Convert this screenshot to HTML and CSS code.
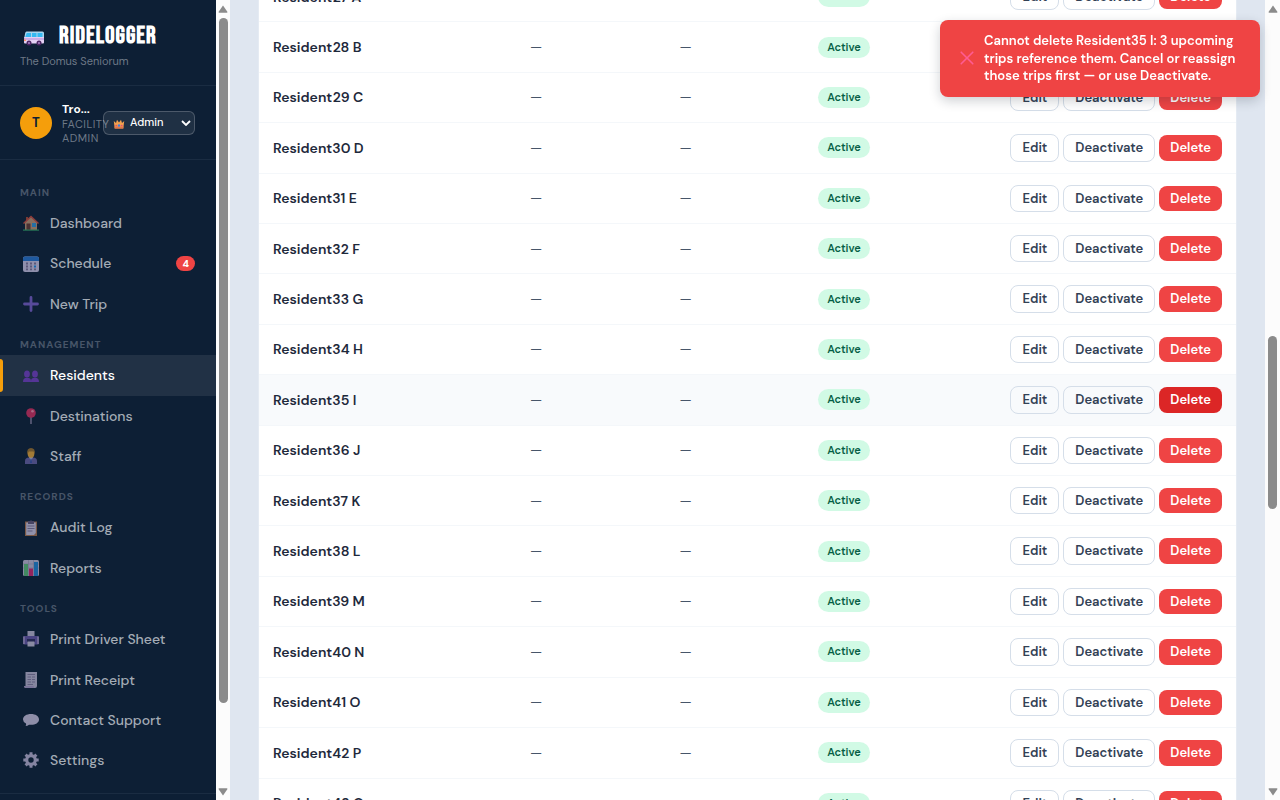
FILE: index.html
```html
<!DOCTYPE html>
<html lang="en">
<head>
<meta charset="utf-8">
<meta name="viewport" content="width=device-width, initial-scale=1">
<title>RideLogger – Residents</title>
<link rel="stylesheet" href="styles.css">
</head>
<body>
<div class="app">
  <aside class="sidebar">
    <header class="brand">
      <div class="brand-row">
        <svg class="brand-icon" viewBox="0 0 22 16" aria-hidden="true">
          <path d="M3.500 1.500H19.500Q21 1.500 21 3V8H1.200L2.200 3Q2.500 1.500 3.500 1.500Z" fill="#a9d5ee"/>
          <path d="M3.700 3H8V7H2.300ZM9 3H13.500V7H9ZM14.500 3H19.500V7H14.500Z" fill="#35b9f2"/>
          <path d="M1.200 7H21V12.500Q21 13.500 20 13.500H2Q1 13.500 1 12.500Z" fill="#e3d0f4"/>
          <path d="M1 8.500H21V9.500H1Z" fill="#b58bd8"/>
          <path d="M1 9.500H3V11H1Z" fill="#ff9a6a"/>
          <circle cx="6" cy="13" r="2.500" fill="#4b2563"/><circle cx="16" cy="13" r="2.500" fill="#4b2563"/>
          <circle cx="6" cy="13" r="1" fill="#a884c4"/><circle cx="16" cy="13" r="1" fill="#a884c4"/>
        </svg>
        <span class="brand-name">RIDELOGGER</span>
      </div>
      <div class="brand-sub">The Domus Seniorum</div>
    </header>
    <section class="user">
      <div class="avatar">T</div>
      <div class="user-info">
        <div class="user-name">Tro...</div>
        <div class="user-role">FACILITY ADMIN</div>
      </div>
      <div class="role-picker">
        <select class="role-select" aria-label="Role"><option>Admin</option></select>
        <svg class="crown" viewBox="0 0 12 12" aria-hidden="true">
          <path d="M.800 3 3 5 4 1.800 6 4.500 8 1.800 9 5 11.200 3 10.300 10.500H1.700Z" fill="#f3a04e"/>
          <path d="M1.500 8.500H10.500L10.300 10.500H1.700Z" fill="#e0744a"/>
          <circle cx="6" cy="7.500" r="1.200" fill="#3f7fe0"/><circle cx="3.200" cy="7.500" r=".8" fill="#e0457b"/><circle cx="8.800" cy="7.500" r=".8" fill="#e0457b"/>
        </svg>
        <svg class="chevron" viewBox="0 0 10 6" aria-hidden="true"><path d="M1 1 5 5 9 1" fill="none" stroke="#fff" stroke-width="1.800"/></svg>
      </div>
    </section>
    <nav class="nav">
      <h2 class="nav-label">MAIN</h2>
      <a class="nav-item" href="#"><svg class="nav-icon" viewBox="0 0 16 16" aria-hidden="true"><path d="M3 2H5V5H3Z" fill="#b04a32"/><path d="M2 7 8 1.500 14 7V15H2Z" fill="#c99a76"/><path d="M0 8 8 .500 16 8 15 9 8 2.500 1 9Z" fill="#d34b3e"/><path d="M3.500 8.500H7.500V15H3.500Z" fill="#6b3b33"/><path d="M9 8H13V12H9Z" fill="#2f9be0"/><path d="M0 14.500H16V15.700H0Z" fill="#35a869"/></svg><span>Dashboard</span></a>
      <a class="nav-item" href="#"><svg class="nav-icon" viewBox="0 0 16 16" aria-hidden="true"><rect y=".5" width="16" height="15.500" rx="2" fill="#d5cdec"/><path d="M0 5V2.500Q0 .500 2 .500H14Q16 .500 16 2.500V5Z" fill="#2878d8"/><path d="M3 6.500H5V8.500H3ZM7 6.500H9V8.500H7ZM11 6.500H13V8.500H11ZM3 9.500H5V11.500H3ZM7 9.500H9V11.500H7ZM3 12.500H5V14.200H3ZM7 12.500H9V14.200H7ZM11 12.500H13V14.200H11Z" fill="#85799f"/><path d="M11 9.500H13V11.500H11Z" fill="#1d8ff0"/></svg><span>Schedule</span><span class="badge">4</span></a>
      <a class="nav-item" href="#"><svg class="nav-icon" viewBox="0 0 16 16" aria-hidden="true"><path d="M8 1.500V14.500M1.500 8H14.500" fill="none" stroke="#7f62d0" stroke-width="2.800" stroke-linecap="round"/></svg><span>New Trip</span></a>
      <h2 class="nav-label">MANAGEMENT</h2>
      <a class="nav-item active" href="#" aria-current="page"><svg class="nav-icon" viewBox="0 0 16 16" aria-hidden="true"><g fill="#7238c4"><ellipse cx="4" cy="7" rx="2.900" ry="3.500"/><ellipse cx="12" cy="7" rx="2.900" ry="3.500"/><path d="M0 15Q0 10.800 4 10.800T8 14Q8 10.800 12 10.800T16 15Z"/></g></svg><span>Residents</span></a>
      <a class="nav-item" href="#"><svg class="nav-icon" viewBox="0 0 16 16" aria-hidden="true"><path d="M7.200 8H8.800V16H7.200Z" fill="#8b82a3"/><circle cx="8" cy="5" r="4.800" fill="#e02f62"/><circle cx="9.500" cy="3.200" r="1.300" fill="#ff92ae"/></svg><span>Destinations</span></a>
      <a class="nav-item" href="#"><svg class="nav-icon" viewBox="0 0 16 16" aria-hidden="true"><path d="M2 16V13Q2 9.500 6 9.500H10Q14 9.500 14 13V16Z" fill="#6c63a8"/><path d="M6 9H10L8 13Z" fill="#d6cde9"/><path d="M7.500 10.500H8.500L9 15H7Z" fill="#3a56b0"/><ellipse cx="8" cy="5.500" rx="3.400" ry="4.200" fill="#f2ad38"/><path d="M4.300 6Q3.500 0 8 0T11.700 6L10.500 3.500H6Z" fill="#a6762c"/></svg><span>Staff</span></a>
      <h2 class="nav-label">RECORDS</h2>
      <a class="nav-item" href="#"><svg class="nav-icon" viewBox="0 0 16 16" aria-hidden="true"><path d="M2 1.500H14V16H2Z" fill="#b5774f"/><path d="M3.200 2.500H12.800V13L11 15H3.200Z" fill="#d6cee9"/><path d="M5 1H7Q8-.500 9 1H11V4H5Z" fill="#65597c"/><path d="M4.500 6H11.500M4.500 8.500H11.500M4.500 11H9.500" stroke="#877ba2"/></svg><span>Audit Log</span></a>
      <a class="nav-item" href="#"><svg class="nav-icon" viewBox="0 0 16 16" aria-hidden="true"><rect width="16" height="16" rx="1.500" fill="#cbc3df"/><path d="M0 4H16M0 8H16M5.500 0V16M10.500 0V16" stroke="#a79dbd" stroke-width=".7"/><path d="M1 4H5V16H1Z" fill="#5fc47a"/><path d="M6 8.500H10V16H6Z" fill="#dc2874"/><path d="M11 2H15V16H11Z" fill="#2389dd"/></svg><span>Reports</span></a>
      <h2 class="nav-label">TOOLS</h2>
      <a class="nav-item" href="#"><svg class="nav-icon" viewBox="0 0 16 16" aria-hidden="true"><path d="M4.500 0H11.500V6H4.500Z" fill="#c8bfda"/><rect y="5" width="16" height="8.500" rx="1.500" fill="#6b58ad"/><path d="M0 5.500H2V13H0ZM14 5.500H16V13H14Z" fill="#a391c8"/><path d="M4 8H12V11H4Z" fill="#302d61"/><path d="M4.500 10.500H11.500V15.500H4.500Z" fill="#cec5df"/></svg><span>Print Driver Sheet</span></a>
      <a class="nav-item" href="#"><svg class="nav-icon" viewBox="0 0 16 16" aria-hidden="true"><path d="M2.500 0H14V14Q14 16 12 16H3Q1 16 1 14H2.500Z" fill="#c6bdd9"/><path d="M4.500 2.500H12M4.500 5H8M9 5H12M4.500 7.500H8M9 7.500H12M4.500 10H8M9 10H12M4.500 12.500H10" stroke="#8b81a6"/><path d="M1 14H10.500Q11 15.500 12 16H3Q1 16 1 14Z" fill="#b3a2cf"/></svg><span>Print Receipt</span></a>
      <a class="nav-item" href="#"><svg class="nav-icon" viewBox="0 0 16 16" aria-hidden="true"><path d="M8 2C12.500 2 16 4.200 16 7.500S12.500 12.800 8 12.800Q7 12.800 6 12.700 4.500 14 2.500 14 3.500 13 3 11.500 0 10 0 7.500C0 4.200 3.500 2 8 2Z" fill="#d3cae6"/></svg><span>Contact Support</span></a>
      <a class="nav-item" href="#"><svg class="nav-icon" viewBox="0 0 16 16" aria-hidden="true"><circle cx="8" cy="8" r="4.300" fill="none" stroke="#c4badb" stroke-width="3.200"/><path d="M8 .300V3M8 13V15.700M.300 8H3M13 8H15.700M2.600 2.600 4.500 4.500M11.500 11.500 13.400 13.400M2.600 13.400 4.500 11.500M11.500 4.500 13.400 2.600" stroke="#c4badb" stroke-width="3"/></svg><span>Settings</span></a>
    </nav>
    <footer class="sidebar-foot"></footer>
  </aside>
  <div class="scrollbar side-scroll" aria-hidden="true">
    <svg class="arrow" viewBox="0 0 10 8"><path d="M5 .500 9.500 7Q9.500 7.800 8.700 7.800H1.300Q.500 7.800 .500 7Z" fill="#8b8b8b"/></svg>
    <div class="track"><div class="thumb"></div><div class="rest"></div></div>
    <svg class="arrow" viewBox="0 0 10 8"><path d="M5 7.500 9.500 1Q9.500 .200 8.700 .200H1.300Q.500 .200 .500 1Z" fill="#8b8b8b"/></svg>
  </div>
  <main class="content">
    <div class="panel">
      <table class="residents">
        <colgroup><col class="col-name"><col class="col-a"><col class="col-b"><col></colgroup>
        <tbody id="rows"></tbody>
      </table>
    </div>
  </main>
  <div class="scrollbar page-scroll" aria-hidden="true">
    <svg class="arrow" viewBox="0 0 10 8"><path d="M5 .500 9.500 7Q9.500 7.800 8.700 7.800H1.300Q.500 7.800 .500 7Z" fill="#8b8b8b"/></svg>
    <div class="track"><div class="before"></div><div class="thumb"></div><div class="rest"></div></div>
    <svg class="arrow" viewBox="0 0 10 8"><path d="M5 7.500 9.500 1Q9.500 .200 8.700 .200H1.300Q.500 .200 .500 1Z" fill="#8b8b8b"/></svg>
  </div>
</div>
<div class="toast" role="alert">
  <svg class="toast-icon" viewBox="0 0 14 14" aria-hidden="true"><path d="M1.200 1.200 12.800 12.800M12.800 1.200 1.200 12.800" stroke="#ff5c93" stroke-width="1.600" stroke-linecap="round"/></svg>
  <div>Cannot delete Resident35 I: 3 upcoming<br>trips reference them. Cancel or reassign<br>those trips first — or use Deactivate.</div>
</div>
<script src="app.js"></script>
</body>
</html>
```
FILE: styles.css
```css
* { box-sizing: border-box; }

body {
  margin: 0;
  font-family: "DM Sans", Inter, "Open Sans", sans-serif;
  font-size: 14px;
  line-height: 1.6;
  color: #1e293b;
  background: #dfe6f0;
}

button, select { font-family: inherit; }

.app { display: flex; height: 100vh; overflow: hidden; }

/* Sidebar */
.sidebar {
  flex: 0 0 216px;
  display: flex;
  flex-direction: column;
  overflow: hidden;
  background: #0d1f35;
}

.brand {
  flex: none;
  padding: 20px 20px 14px;
  border-bottom: 1px solid #1a2c42;
}
.brand-row { display: flex; align-items: center; gap: 14px; padding-left: 3px; height: 32px; }
.brand-icon { width: 22px; height: 16px; margin-top: 3px; }
.brand-name {
  font-family: "Bebas Neue", "Roboto Condensed", "Liberation Sans Narrow", "Liberation Sans", sans-serif;
  font-size: 24px;
  font-weight: 700;
  letter-spacing: 1px;
  line-height: 30px;
  color: #fff;
}
.brand-sub { font-size: 11px; line-height: 19px; color: #6e7987; }

.user {
  flex: none;
  display: flex;
  align-items: center;
  gap: 10px;
  padding: 15px 21px 14px 20px;
  border-bottom: 1px solid #1a2c42;
}
.avatar {
  flex: none;
  width: 32px;
  height: 32px;
  border-radius: 50%;
  background: #f59e0b;
  color: #0d1f35;
  font-size: 13px;
  font-weight: 700;
  line-height: 32px;
  text-align: center;
}
.user-info { flex: 1; min-width: 0; }
.user-name { font-size: 12px; font-weight: 700; line-height: 16px; color: #fff; white-space: nowrap; }
.user-role { font-size: 11px; letter-spacing: .5px; line-height: 14px; color: #6e7987; }
.role-picker { position: relative; flex: 0 0 92px; display: flex; }
.role-select {
  appearance: none;
  width: 100%;
  height: 24px;
  padding: 0 20px 2px 26px;
  border: 1px solid rgba(255, 255, 255, .2);
  border-radius: 6px;
  background: rgba(255, 255, 255, .08);
  color: #fff;
  font-size: 11px;
  font-weight: 500;
}
.crown { position: absolute; left: 10px; top: 7px; width: 12px; height: 12px; }
.chevron { position: absolute; right: 4px; top: 9px; width: 10px; height: 6px; }

.nav { flex: none; padding: 12px 0; }
.nav-label {
  margin: 0;
  padding: 13px 20px 2px;
  font-size: 10px;
  font-weight: 700;
  letter-spacing: 1px;
  line-height: 16px;
  color: #475568;
}
.nav-item {
  position: relative;
  display: flex;
  align-items: center;
  gap: 11px;
  padding: 9px 21px 9px 23px;
  color: #a4acb6;
  font-size: 14px;
  font-weight: 500;
  text-decoration: none;
}
.nav-icon { flex: none; width: 16px; height: 16px; opacity: .65; }
.nav-item.active { background: #213145; color: #fff; }
.nav-item.active::before {
  content: "";
  position: absolute;
  left: 0;
  top: 4px;
  bottom: 4px;
  width: 3px;
  border-radius: 0 3px 3px 0;
  background: #f59e0b;
}
.badge {
  margin-left: auto;
  padding: 0 6px;
  border-radius: 8px;
  background: #ef4444;
  color: #fff;
  font-size: 10px;
  font-weight: 800;
  line-height: 15px;
}
.sidebar-foot { flex: 1; border-top: 1px solid #1a2c42; }

/* Scrollbars */
.scrollbar {
  display: flex;
  flex-direction: column;
  align-items: center;
  padding: 5px 0 4px;
  background: #fcfcfc;
}
.side-scroll { flex: 0 0 14px; }
.page-scroll { flex: 0 0 15px; }
.arrow { flex: none; width: 10px; height: 8px; }
.track { flex: 1; display: flex; flex-direction: column; width: 9px; padding: 5px 0; }
.thumb { border-radius: 5px; background: #8b8b8b; }
.side-scroll .thumb { flex: 685; }
.side-scroll .rest { flex: 80; }
.page-scroll .before { flex: 318; }
.page-scroll .thumb { flex: 173; }
.page-scroll .rest { flex: 274; }

/* Residents table */
.content { flex: 1; min-width: 0; padding: 0 28px; overflow: hidden; }
.panel {
  margin-top: -29px;
  border: 1px solid #e5ebf3;
  background: #fff;
}
.residents { width: 100%; table-layout: fixed; border-collapse: separate; border-spacing: 0; }
.col-name { width: 26.3%; }
.col-a { width: 15.3%; }
.col-b { width: 14.2%; }
.residents td {
  padding: 11px 14px;
  border-bottom: 1px solid #f4f7fa;
  color: #475569;
  vertical-align: middle;
}
.residents .name { color: #1e293b; font-weight: 600; }
.residents tr.hovered td { background: #f8fafc; }
.row-end { display: flex; align-items: center; justify-content: space-between; }
.status {
  padding: 2px 9px;
  border-radius: 11px;
  background: #d1fae5;
  color: #065f46;
  font-size: 11px;
  font-weight: 600;
  line-height: 17px;
}
.actions { display: flex; align-items: center; gap: 4px; }
.btn {
  padding: 4px 11px;
  border: 1px solid #d5dee9;
  border-radius: 8px;
  background: transparent;
  color: #334155;
  font-size: 13px;
  font-weight: 600;
  line-height: 1.34;
}
.btn-danger { border: 0; background: #ef4444; color: #fff; }
.hovered .btn-danger { background: #dc2626; }

/* Toast */
.toast {
  position: fixed;
  top: 20px;
  right: 20px;
  z-index: 10;
  display: flex;
  align-items: center;
  gap: 10px;
  width: 320px;
  padding: 12px 20px;
  border-radius: 8px;
  background: #ef4444;
  color: #fff;
  font-size: 13px;
  font-weight: 600;
  line-height: 1.35;
  white-space: nowrap;
  box-shadow: 0 4px 12px rgba(15, 23, 42, .2);
}
.toast-icon { flex: none; width: 14px; height: 14px; }
```
FILE: app.js
```js
const body = document.getElementById("rows");
for (let n = 27; n <= 43; n++) {
  const name = "Resident" + n + " " + String.fromCharCode(65 + n - 27);
  const tr = document.createElement("tr");
  if (n === 35) tr.className = "hovered";
  tr.innerHTML =
    '<td class="name">' + name + "</td><td>—</td><td>—</td>" +
    '<td><div class="row-end"><span class="status">Active</span><div class="actions">' +
    '<button class="btn" type="button">Edit</button>' +
    '<button class="btn" type="button">Deactivate</button>' +
    '<button class="btn btn-danger" type="button">Delete</button>' +
    "</div></div></td>";
  body.appendChild(tr);
}
```
